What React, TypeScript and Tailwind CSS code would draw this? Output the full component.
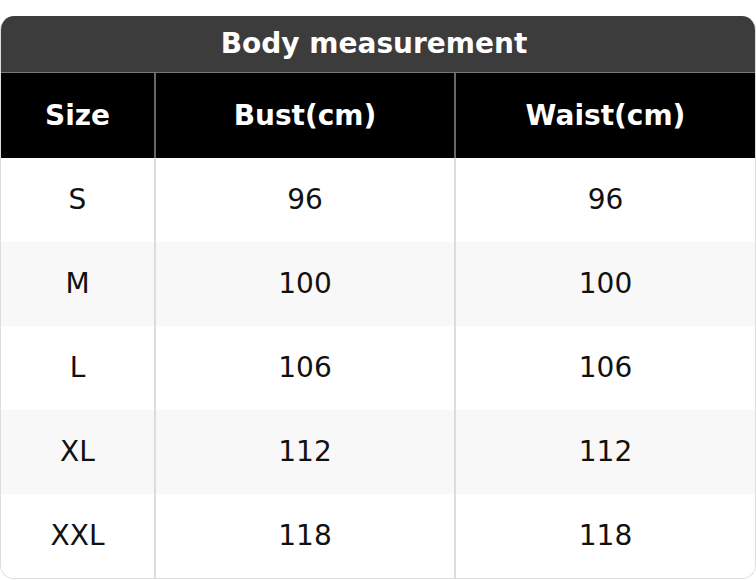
const rows = [
  ["S", "96", "96"],
  ["M", "100", "100"],
  ["L", "106", "106"],
  ["XL", "112", "112"],
  ["XXL", "118", "118"],
];

export default function App() {
  return (
    <div className="h-[580px] w-[756px] bg-white pt-4 font-['DejaVu_Sans',sans-serif]">
      <div className="overflow-hidden rounded-[14px] border-x border-b border-[#dddddd]">
        <div className="flex h-[56px] items-center justify-center bg-[#3c3c3c] pr-2 text-[28px] font-bold text-white">
          Body measurement
        </div>
        <div className="grid h-[86px] grid-cols-[155px_300px_1fr] border-t border-[#777777] bg-black text-[28px] font-bold text-white">
          <div className="flex items-center justify-center border-r-2 border-[#666666]">Size</div>
          <div className="flex items-center justify-center border-r-2 border-[#666666]">Bust(cm)</div>
          <div className="flex items-center justify-center">Waist(cm)</div>
        </div>
        {rows.map((r, i) => (
          <div
            key={r[0]}
            className={`grid h-[84px] grid-cols-[155px_300px_1fr] text-[28px] text-[#111111] ${
              i % 2 === 1 ? "bg-[#f8f8f8]" : "bg-white"
            }`}
          >
            <div className="flex items-center justify-center border-r-2 border-[#dddddd]">{r[0]}</div>
            <div className="flex items-center justify-center border-r-2 border-[#dddddd]">{r[1]}</div>
            <div className="flex items-center justify-center">{r[2]}</div>
          </div>
        ))}
      </div>
    </div>
  );
}
